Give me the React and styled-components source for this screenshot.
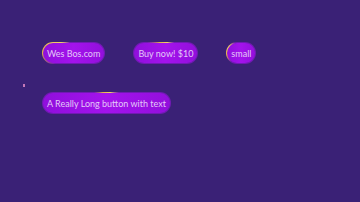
import React from "react";
import styled, { createGlobalStyle } from "styled-components";

const GlobalStyle = createGlobalStyle`
  html, body {
    margin: 0;
    padding: 0;
    background: #3a2176;
    font-family: Lato, "Open Sans", sans-serif;
  }
`;

const Page = styled.div`
  position: relative;
  width: 360px;
  height: 202px;
  box-sizing: border-box;
  padding: 42px 42px;
  display: flex;
  flex-wrap: wrap;
  align-content: flex-start;
  column-gap: 28px;
  row-gap: 28px;
`;

const Button = styled.button`
  height: 22px;
  padding: 0 4px;
  border: 1px solid transparent;
  border-radius: 999px;
  font-family: inherit;
  font-size: 9px;
  color: #e3c9f8;
  white-space: nowrap;
  background:
    linear-gradient(90deg, #900fdc, #a313ec, #920fdc) padding-box,
    conic-gradient(
        from ${(p) => p.$angle}deg,
        #e2b04a 0deg,
        #f4d06a 40deg,
        rgba(150, 20, 220, 0.6) 70deg,
        rgba(150, 20, 220, 0.6) 330deg,
        #e2b04a 360deg
      )
      border-box;
  cursor: pointer;
`;

const Cursor = styled.span`
  position: absolute;
  left: 23px;
  top: 84px;
  width: 2px;
  height: 3px;
  background: #c478b8;
`;

const buttons = [
  { label: "Wes Bos.com", angle: 270 },
  { label: "Buy now! $10", angle: 330 },
  { label: "small", angle: 260 },
  { label: "A Really Long button with text", angle: 340 },
];

export default function App() {
  return (
    <>
      <GlobalStyle />
      <Page>
        {buttons.map((b) => (
          <Button key={b.label} $angle={b.angle}>
            {b.label}
          </Button>
        ))}
        <Cursor />
      </Page>
    </>
  );
}
